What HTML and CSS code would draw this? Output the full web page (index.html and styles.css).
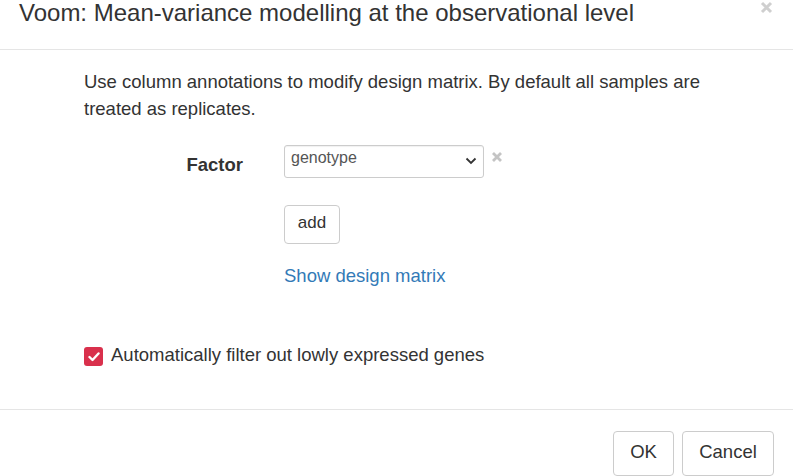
FILE: index.html
```html
<!DOCTYPE html>
<html>
<head>
<meta charset="utf-8">
<link rel="stylesheet" href="styles.css">
</head>
<body>
<div class="modal">
  <div class="modal-header">
    <h4 class="title">Voom: Mean-variance modelling at the observational level</h4>
    <svg class="close" width="13" height="13" viewBox="0 0 13 13"><path d="M2 2 L11 11 M11 2 L2 11" stroke="#cfcfcf" stroke-width="3"/></svg>
  </div>
  <div class="modal-body">
    <p class="intro">Use column annotations to modify design matrix. By default all samples are treated as replicates.</p>
    <div class="form-row">
      <label class="label">Factor</label>
      <div class="controls">
        <div class="select-line">
          <div class="select">
            <span>genotype</span>
            <svg class="chev" width="12" height="8" viewBox="0 0 12 8"><path d="M1.5 1.5 L6 6 L10.5 1.5" fill="none" stroke="#333" stroke-width="1.8"/></svg>
          </div>
          <svg class="remove" width="12" height="12" viewBox="0 0 12 12"><path d="M2 2 L10 10 M10 2 L2 10" stroke="#c4c4c4" stroke-width="2.8"/></svg>
        </div>
        <button class="btn add">add</button>
        <a class="link">Show design matrix</a>
      </div>
    </div>
    <div class="check-row">
      <span class="checkbox"><svg width="12" height="10" viewBox="0 0 12 10"><path d="M1.5 5 L4.5 8 L10.5 1.5" fill="none" stroke="#fff" stroke-width="2.4" stroke-linecap="round" stroke-linejoin="round"/></svg></span>
      <span class="check-label">Automatically filter out lowly expressed genes</span>
    </div>
  </div>
  <div class="modal-footer">
    <button class="btn ok">OK</button>
    <button class="btn cancel">Cancel</button>
  </div>
</div>
</body>
</html>
```
FILE: styles.css
```css
* { box-sizing: border-box; }
html, body { margin: 0; padding: 0; background: #fff; }
body {
  font-family: "Liberation Sans", Arial, sans-serif;
  color: #333;
  width: 793px;
  height: 476px;
  overflow: hidden;
}
.modal { display: flex; flex-direction: column; }
.modal-header {
  height: 50px;
  border-bottom: 1px solid #e5e5e5;
  display: flex;
  justify-content: space-between;
  align-items: flex-start;
  padding: 0 20px 0 19px;
}
.title {
  margin: 0;
  font-size: 24px;
  font-weight: normal;
  line-height: 26px;
}
.close {
  margin-top: 1px;
}
.modal-body {
  padding: 18px 84px 0 84px;
  height: 359px;
}
.intro {
  margin: 0;
  font-size: 18.5px;
  line-height: 27px;
  width: 660px;
}
.form-row {
  display: flex;
  margin-top: 23px;
}
.label {
  width: 159px;
  text-align: right;
  font-weight: bold;
  font-size: 18.5px;
  line-height: 21px;
  padding-top: 9px;
  margin-right: 41px;
}
.controls { display: flex; flex-direction: column; align-items: flex-start; }
.select-line { display: flex; align-items: flex-start; }
.select {
  width: 200px;
  height: 33px;
  border: 1px solid #ccc;
  border-radius: 3px;
  display: flex;
  justify-content: space-between;
  align-items: flex-start;
  padding: 3px 6px 0 6px;
  font-size: 16px;
  line-height: 18px;
  color: #555;
  box-shadow: inset 0 1px 1px rgba(0,0,0,0.06);
}
.chev { margin-top: 8px; }
.remove {
  margin-left: 7px;
  margin-top: 6px;
}
.btn {
  font-family: "Liberation Sans", Arial, sans-serif;
  background: #fff;
  border: 1px solid #ccc;
  border-radius: 4px;
  color: #333;
  font-size: 18.5px;
  padding: 0;
}
.add {
  margin-top: 27px;
  width: 56px;
  height: 39px;
  font-size: 17px;
  padding-bottom: 3px;
}
.link {
  color: #337ab7;
  font-size: 18.5px;
  margin-top: 20px;
  line-height: 24px;
}
.check-row {
  display: flex;
  align-items: center;
  margin-top: 55px;
}
.checkbox {
  width: 19px;
  height: 19px;
  background: #d9304c;
  border-radius: 3px;
  display: flex;
  align-items: center;
  justify-content: center;
  margin-right: 8px;
  margin-top: 3px;
}
.check-label { font-size: 18.5px; line-height: 24px; }
.modal-footer {
  border-top: 1px solid #e5e5e5;
  display: flex;
  justify-content: flex-end;
  gap: 8px;
  padding: 21px 19px 0 0;
  height: 67px;
}
.ok { width: 61px; height: 45px; padding-bottom: 3px; }
.cancel { width: 92px; height: 45px; padding-bottom: 3px; }
```
